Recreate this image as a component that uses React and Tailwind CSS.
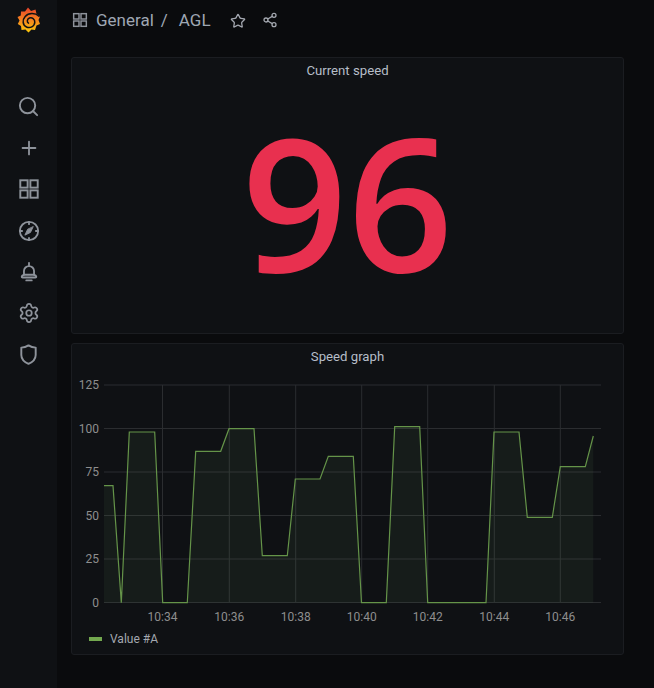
import React from "react";
import { Search, Plus, Settings, Star, Share2 } from "lucide-react";

const pts = [[104,485.7],[113,485.7],[121.3,602.7],[129.3,432],[154.7,432],[162.7,602.7],[187.3,602.7],[195.7,451.3],[220.7,451.3],[229,428.7],[254,428.7],[262.3,555.7],[287.3,555.7],[295.3,479],[320,479],[328.3,456.3],[353.3,456.3],[361.5,602.7],[386.3,602.7],[394.7,426.7],[419.7,426.7],[427.7,602.7],[486,602.7],[494,432],[519,432],[527.3,517.3],[552.3,517.3],[560.3,466.7],[585.3,466.7],[593.3,436]];
const OX = 72, OY = 366;
const line = pts.map(([x, y]) => `${x - OX},${y - OY}`).join(" ");
const area = `${104 - OX},${602.7 - OY} ${line} ${593.3 - OX},${602.7 - OY}`;
const ys = [[125, 385], [100, 428.5], [75, 472], [50, 515.5], [25, 559], [0, 602.5]];
const xs = [["10:34", 162.5], ["10:36", 229.3], ["10:38", 295.7], ["10:40", 361.7], ["10:42", 427.7], ["10:44", 494.3], ["10:46", 560.3]];

function Logo() {
  return (
    <svg width="24" height="26" viewBox="0 0 24 26" className="block">
      <defs>
        <linearGradient id="g" x1="0" y1="1" x2="0" y2="0">
          <stop offset="0" stopColor="#fbca0a" />
          <stop offset="0.5" stopColor="#f5851f" />
          <stop offset="1" stopColor="#e8412a" />
        </linearGradient>
      </defs>
      <path fill="url(#g)" d="M11 0.5 L14 4 L18.5 2.5 L19.5 7 L23 9.5 L21.5 13 L23 17 L19.5 18.5 L18 23 L14.5 22.5 L11.5 25.5 L8.5 22.5 L4.5 23 L4 19 L0.8 17 L2.5 13.5 L0.5 10 L3.8 8.5 L4 4.5 L8 4.5 Z" />
      <path fill="none" stroke="#0f1114" strokeWidth="1.5" strokeLinecap="round" d="M22 9.2 C18 5.5 11.5 5.8 8.2 9.5 C5 13 5.6 18.2 9.5 20 C13 21.6 17.5 19.6 17.8 15.3 C18 12 15 10 12.4 11 C10 12 9.6 15 11.5 16.2" />
    </svg>
  );
}

function NavIcon({ children }) {
  return <div className="flex h-[41.3px] items-center justify-center">{children}</div>;
}

const Svg = ({ children, size = 22 }) => (
  <svg width={size} height={size} viewBox="0 0 24 24" fill="none" stroke="#8e939b" strokeWidth="2" strokeLinecap="round" strokeLinejoin="round">{children}</svg>
);

function Apps({ size = 22, color = "#8e939b", sw = 2.1 }) {
  return (
    <svg width={size} height={size} viewBox="0 0 24 24" fill="none" stroke={color} strokeWidth={sw}>
      <rect x="2.5" y="2.5" width="8" height="8" />
      <rect x="13.5" y="2.5" width="8" height="8" />
      <rect x="2.5" y="13.5" width="8" height="8" />
      <rect x="13.5" y="13.5" width="8" height="8" />
    </svg>
  );
}

function CompassIcon() {
  return (
    <Svg size={22}>
      <circle cx="12" cy="12" r="10" />
      <path d="M12 2v2.5M12 19.5V22M2 12h2.5M19.5 12H22" />
      <path d="M16.5 7.5 L13.6 13.6 L7.5 16.5 L10.4 10.4 Z" fill="#8e939b" strokeWidth="1" />
    </Svg>
  );
}

function BellIcon() {
  return (
    <Svg size={22}>
      <path d="M12 2v2.5" />
      <path d="M6.5 15V11a5.5 5.5 0 0 1 11 0v4" />
      <path d="M6.5 15c-1.4.4-2.5 1.2-2.5 2.2 0 .6.4.8 1 .8h14c.6 0 1-.2 1-.8 0-1-1.1-1.8-2.5-2.2z" />
      <path d="M9 21.2h6" />
    </Svg>
  );
}

function ShieldIcon() {
  return (
    <Svg size={23}>
      <path d="M12 2.5 C14.5 4.2 17 4.8 19.5 4.8 V12.5 C19.5 17 16 20 12 21.8 C8 20 4.5 17 4.5 12.5 V4.8 C7 4.8 9.5 4.2 12 2.5 Z" />
    </Svg>
  );
}

export default function App() {
  return (
    <div className="flex h-[688px] w-[654px] overflow-hidden bg-[#0a0b0d] text-[#b6bac2]" style={{ fontFamily: "Roboto, sans-serif" }}>
      <aside className="flex w-[57px] shrink-0 flex-col items-center bg-[#0f1114]">
        <div className="mt-[7px] h-[27px]"><Logo /></div>
        <nav className="mt-[52px] w-full">
          <NavIcon><Search size={23} strokeWidth={2} color="#8e939b" /></NavIcon>
          <NavIcon><Plus size={22} strokeWidth={2} color="#8e939b" /></NavIcon>
          <NavIcon><Apps /></NavIcon>
          <NavIcon><CompassIcon /></NavIcon>
          <NavIcon><BellIcon /></NavIcon>
          <NavIcon><Settings size={22} strokeWidth={1.9} color="#8e939b" /></NavIcon>
          <NavIcon><ShieldIcon /></NavIcon>
        </nav>
      </aside>
      <main className="min-w-0 flex-1 pl-[14px] pr-[30px]">
        <header className="flex h-[57px] items-start pt-[11px]">
          <div className="ml-[1px] mt-[1px]"><Apps size={16} color="#8e939b" sw={2.2} /></div>
          <span className="ml-[8px] text-[17px] leading-[18px] text-[#9fa7b3]">General</span>
          <span className="ml-[7px] text-[17px] leading-[18px] text-[#9fa7b3]">/</span>
          <span className="ml-[11px] text-[17px] leading-[18px] text-[#9fa7b3]">AGL</span>
          <Star size={16} strokeWidth={1.9} color="#a4a8b0" className="ml-[19px] mt-[2px]" />
          <Share2 size={16} strokeWidth={1.9} color="#a4a8b0" className="ml-[16px] mt-[1px]" />
        </header>
        <section className="h-[277px] rounded-[3px] border border-[#1b1d21] bg-[#0f1114]">
          <h2 className="pt-[5px] text-center text-[13.2px] font-normal leading-[16px] text-[#b6bec9]">Current speed</h2>
          <div className="mt-[16px] text-center text-[185px] font-[650] leading-[210px] text-[#e8304f]" style={{ fontFamily: "'Open Sans', sans-serif" }}>96</div>
        </section>
        <section className="mt-[9px] h-[312px] rounded-[3px] border border-[#1b1d21] bg-[#0f1114]">
          <h2 className="pt-[5px] text-center text-[13.2px] font-normal leading-[16px] text-[#b6bec9]">Speed graph</h2>
          <svg width="552" height="266" viewBox="0 0 552 266" className="mt-[1px] block" fontFamily="Roboto, sans-serif" fontSize="12">
            {ys.map(([l, y]) => (
              <g key={l}>
                <line x1={104 - OX} x2={601 - OX} y1={y - OY} y2={y - OY} stroke="#2b2d30" />
                <text x={99 - OX} y={y - OY + 4} textAnchor="end" fill="#8e8e8e">{l}</text>
              </g>
            ))}
            {xs.map(([l, x]) => (
              <g key={l}>
                <line x1={x - OX} x2={x - OX} y1={385 - OY} y2={602.5 - OY} stroke="#2b2d30" />
                <text x={x - OX} y={621 - OY} textAnchor="middle" fill="#8e8e8e">{l}</text>
              </g>
            ))}
            <polygon points={area} fill="#7eb26d" fillOpacity="0.07" />
            <polyline points={line} fill="none" stroke="#659449" strokeWidth="1.2" />
          </svg>
          <div className="ml-[17px] mt-[-1px] flex items-center text-[12px] leading-[16px] text-[#a4a8b0]">
            <span className="h-[4px] w-[13px] bg-[#73a84f]" />
            <span className="ml-[8px]">Value #A</span>
          </div>
        </section>
      </main>
    </div>
  );
}
